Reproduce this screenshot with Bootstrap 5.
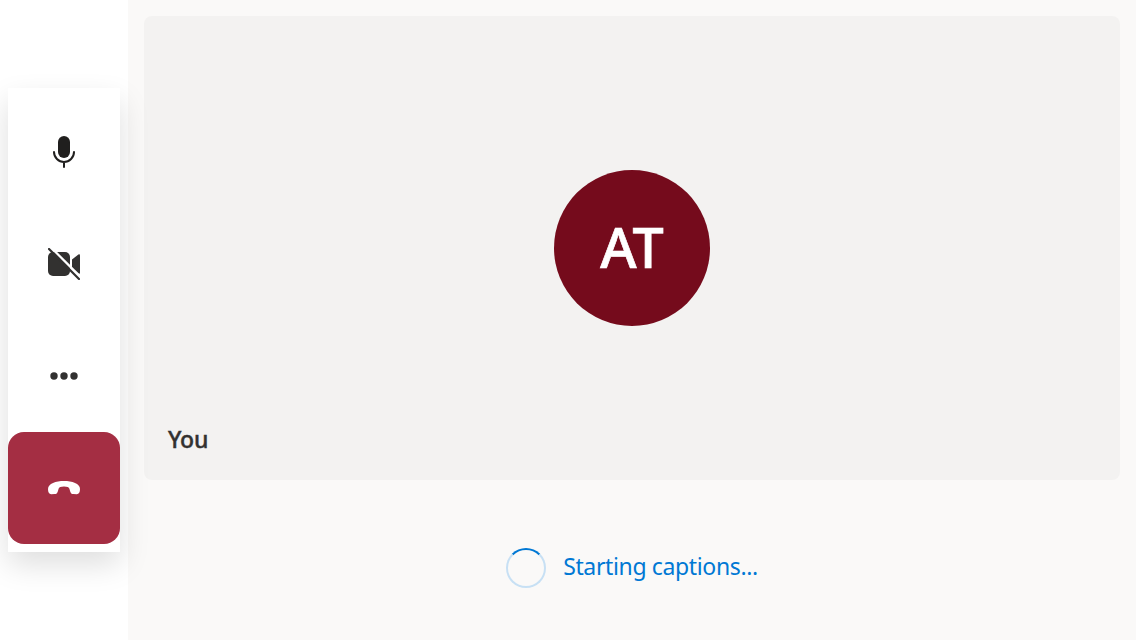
<!DOCTYPE html>
<html lang="en">
<head>
<meta charset="utf-8">
<meta name="viewport" content="width=device-width, initial-scale=1">
<title>Call</title>
<link href="https://cdn.jsdelivr.net/npm/bootstrap@5.3.0/dist/css/bootstrap.min.css" rel="stylesheet">
<style>
  body { font-family: "Noto Sans", "Open Sans", sans-serif; background: #faf9f8; color: #323130; }
  .rail { width: 128px; background: #fff; }
  .controls { background: #fff; height: 464px; box-shadow: 0 12.8px 28.8px rgba(0,0,0,.132); position: relative; z-index: 1; }
  .control-btn { width: 112px; height: 112px; border-radius: 0; color: #323130; }
  .hang-up, .hang-up:hover { background: #a42e43; border-radius: 16px; color: #fff; }
  .tile { height: 464px; background: #f3f2f1; border-radius: 8px; position: relative; }
  .persona { width: 156px; height: 156px; background: #750b1c; font-size: 55.5px; font-weight: 500; line-height: 1; -webkit-text-stroke: .7px #fff; }
  .persona span { padding-bottom: 3px; }
  .self-name { position: absolute; left: 24px; bottom: 25px; font-size: 23px; line-height: 32px; font-weight: 500; letter-spacing: -.2px; -webkit-text-stroke: .4px #323130; }
  .captions { height: 176px; color: #0078d4; font-size: 23px; }
  .caption-text { letter-spacing: -.36px; padding-bottom: 4px; margin-left: 1px; }
  .ring { width: 40px; height: 40px; border: 2px solid #c7e0f4; border-top-color: #0078d4; border-radius: 50%; }
</style>
</head>
<body>
<div class="d-flex vh-100 overflow-hidden">
  <aside class="rail d-flex align-items-center px-2 flex-shrink-0">
    <div class="controls d-flex flex-column pt-2">
      <button class="btn control-btn border-0 p-0 d-flex align-items-center justify-content-center" aria-label="Mute">
        <svg width="32" height="32" viewBox="0 0 32 32"><rect x="10" y="0" width="12" height="22" rx="6" fill="#201f1e"/><path d="M6 16a10 10 0 0 0 20 0M16 26v5" fill="none" stroke="#201f1e" stroke-width="2" stroke-linecap="round"/></svg>
      </button>
      <button class="btn control-btn border-0 p-0 d-flex align-items-center justify-content-center" aria-label="Turn camera on">
        <svg width="32" height="32" viewBox="0 0 32 32"><rect x="0" y="4" width="22" height="24" rx="5" fill="#323130"/><path d="M24 11.500 30.400 6.500Q32 5.600 32 7.500V24.500Q32 26.400 30.400 25.500L24 20.500Z" fill="#323130"/><path d="M2.500-1 33 29.500" stroke="#fff" stroke-width="2.300"/><path d="M1 1 31 31" stroke="#323130" stroke-width="2.200" stroke-linecap="round"/></svg>
      </button>
      <button class="btn control-btn border-0 p-0 d-flex align-items-center justify-content-center" aria-label="More options">
        <svg width="32" height="32" viewBox="0 0 32 32" fill="#323130"><circle cx="6" cy="16" r="3.7"/><circle cx="16" cy="16" r="3.7"/><circle cx="26" cy="16" r="3.7"/></svg>
      </button>
      <button class="btn control-btn hang-up border-0 p-0 d-flex align-items-center justify-content-center" aria-label="Leave">
        <svg width="32" height="32" viewBox="0 0 32 32" fill="#fff"><path d="M16 9C24 9 32 11.500 32 17C32 20.300 31 22.200 28.800 22.200L25.500 22C23.500 22 22.700 21 22.200 19.400L21.400 16.700C21.100 15.300 19 14.500 16 14.500S10.900 15.300 10.600 16.700L9.800 19.400C9.300 21 8.500 22 6.500 22L3.200 22.200C1 22.200 0 20.300 0 17C0 11.500 8 9 16 9Z"/></svg>
      </button>
    </div>
  </aside>
  <main class="flex-grow-1 px-3 pt-3">
    <section class="tile d-flex align-items-center justify-content-center">
      <div class="persona rounded-circle d-flex align-items-center justify-content-center text-white"><span>AT</span></div>
      <div class="self-name">You</div>
    </section>
    <div class="captions d-flex align-items-center justify-content-center gap-3" role="status">
      <div class="ring"></div>
      <span class="caption-text">Starting captions...</span>
    </div>
  </main>
</div>
<script src="https://cdn.jsdelivr.net/npm/bootstrap@5.3.0/dist/js/bootstrap.bundle.min.js"></script>
</body>
</html>
